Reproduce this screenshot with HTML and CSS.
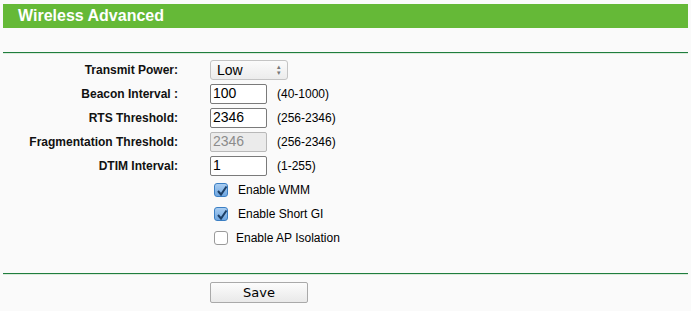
FILE: index.html
```html
<html>
  <head>
    <title>Wireless Advanced</title>
    <link rel="stylesheet" href="styles.css">
  </head>
  <body>
    <div class="page">
      <h1 class="title">Wireless Advanced</h1>
      <div class="rule top"></div>

      <div class="form">
        <div class="label">Transmit Power:</div>
        <div class="field">
          <span class="select">Low<span class="arrows">&#x25B4;<br>&#x25BE;</span></span>
        </div>

        <div class="label">Beacon Interval :</div>
        <div class="field"><span class="input">100</span><span class="range">(40-1000)</span></div>

        <div class="label">RTS Threshold:</div>
        <div class="field"><span class="input">2346</span><span class="range">(256-2346)</span></div>

        <div class="label">Fragmentation Threshold:</div>
        <div class="field"><span class="input disabled">2346</span><span class="range">(256-2346)</span></div>

        <div class="label">DTIM Interval:</div>
        <div class="field"><span class="input">1</span><span class="range">(1-255)</span></div>

        <div class="label"></div>
        <div class="field check"><span class="box on"><svg width="14" height="14" viewBox="0 0 14 14"><path d="M3 7 L6 10.5 L11.5 2.5" fill="none" stroke="#1d3f66" stroke-width="2"/></svg></span>Enable WMM</div>

        <div class="label"></div>
        <div class="field check"><span class="box on"><svg width="14" height="14" viewBox="0 0 14 14"><path d="M3 7 L6 10.5 L11.5 2.5" fill="none" stroke="#1d3f66" stroke-width="2"/></svg></span>Enable Short GI</div>

        <div class="label"></div>
        <div class="field check"><span class="box off"></span>Enable AP Isolation</div>
      </div>

      <div class="rule bottom"></div>
      <div class="actions">
        <span class="button">Save</span>
      </div>
    </div>
  </body>
</html>
```

FILE: styles.css
```css
body { margin: 0; background-color: #fafafa; color: #000000;
       font-family: "Liberation Sans", Arial, sans-serif; font-size: 12px; }

.page { padding: 4px 3px 0 3px; }

.title { margin: 0; height: 24px; line-height: 24px; padding-left: 15px;
         background-color: #65b937; color: #ffffff;
         font-size: 16px; font-weight: bold; }

.rule { height: 1px; background-color: #1f7d3e;
        border-bottom: 1px solid #dcebdc; }
.rule.top    { margin-top: 24px; }
.rule.bottom { margin-top: 25px; }

.form { display: grid; grid-template-columns: 175px auto;
        column-gap: 32px; row-gap: 4px; padding-top: 6px; }

.label { text-align: right; font-weight: bold; height: 20px; line-height: 20px;
         color: #111; }

.field { display: flex; align-items: center; height: 20px; }

.select { display: inline-flex; align-items: center; justify-content: space-between;
          box-sizing: border-box; width: 78px; height: 20px; padding: 0 6px 0 6px;
          border: 1px solid #c4c4c4; border-radius: 3px;
          background: linear-gradient(#fbfbfb, #ececec);
          font-size: 14px; }
.arrows { font-size: 7px; line-height: 6px; color: #777; text-align: center; }

.input { display: inline-block; box-sizing: border-box; width: 57px; height: 20px;
         line-height: 17px; padding-left: 2px; border: 1px solid #7a7a7a;
         border-radius: 2px; background-color: #ffffff; font-size: 14px; }
.input.disabled { background-color: #ebebeb; color: #8c8c8c; border-color: #b8b8b8; }

.range { margin-left: 10px; }

.check { padding-left: 4px; font-size: 12px; }
.box { display: inline-block; box-sizing: border-box; width: 14px; height: 14px;
       border-radius: 3px; margin-right: 10px; }
.box.on  { border: 1px solid #3b7fc4; background: linear-gradient(#a9cdf1, #6fa6e0); }
.box.off { border: 1px solid #9a9a9a; background-color: #ffffff; margin-right: 8px; }

.actions { padding: 7px 0 0 207px; }
.button { display: inline-block; box-sizing: border-box; width: 98px; height: 21px;
          line-height: 19px; text-align: center; border: 1px solid #a9a9a9;
          border-radius: 2px; background: linear-gradient(#fcfcfc, #e9e9e9);
          font-family: "DejaVu Sans", sans-serif; font-size: 13px; }
```
